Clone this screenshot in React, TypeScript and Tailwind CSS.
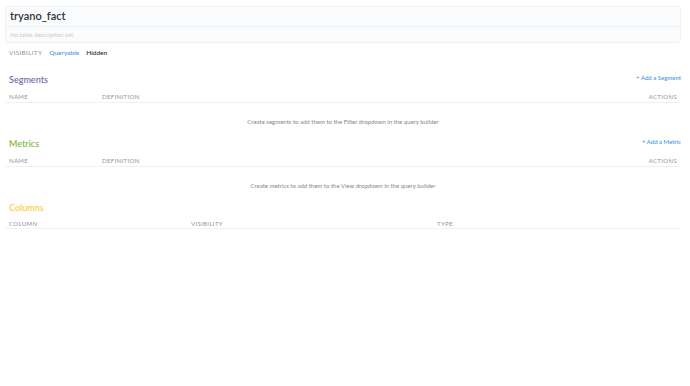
import React from 'react'

const lato = { fontFamily: 'Lato, "Open Sans", sans-serif' }

const Section = ({ title, color, addLabel, empty }: { title: string; color: string; addLabel: string; empty: string }) => (
  <div>
    <div className="flex h-[20px] items-center justify-between">
      <h2 className={`pl-[4px] text-[9px] font-semibold ${color}`}>{title}</h2>
      <span className="pb-[5px] text-[6px] font-semibold text-[#509ee3]">{addLabel}</span>
    </div>
    <div className="flex h-[13px] items-center border-b border-[#f0f1f3] px-[4px] text-[6px] uppercase tracking-[0.06em] text-[#8d939e]">
      <span className="w-[93px]">Name</span>
      <span className="flex-1">Definition</span>
      <span>Actions</span>
    </div>
    <div className="h-[31px] pt-[14px] text-center text-[6px] text-[#7f8790]">{empty}</div>
  </div>
)

export default function App() {
  return (
    <div style={lato} className="h-[386px] w-[690px] bg-white px-[5px] pt-[6px] pr-[9px]">
      <div className="rounded-[3px] border border-[#eef0f2] bg-[#fafbfc]">
        <div className="flex h-[20px] items-center border-b border-[#eef0f2] px-[4px]">
          <h1 className="text-[11px] font-semibold text-[#2e353b]">tryano_fact</h1>
        </div>
        <div className="flex h-[15px] items-center px-[4px] text-[6px] text-[#c9ced3]">No table description yet</div>
      </div>
      <div className="flex h-[20px] items-center px-[4px] text-[6.5px]">
        <span className="mr-[7px] uppercase tracking-[0.04em] text-[#8d939e]">Visibility</span>
        <span className="mr-[7px] font-semibold text-[#509ee3]">Queryable</span>
        <span className="font-semibold text-[#2e353b]">Hidden</span>
      </div>
      <div className="h-[7px]" />
      <Section title="Segments" color="text-[#7172ad]" addLabel="+ Add a Segment" empty="Create segments to add them to the Filter dropdown in the query builder" />
      <Section title="Metrics" color="text-[#84bb4c]" addLabel="+ Add a Metric" empty="Create metrics to add them to the View dropdown in the query builder" />
      <div>
        <div className="flex h-[20px] items-center">
          <h2 className="pl-[4px] text-[9px] font-semibold text-[#f9cf48]">Columns</h2>
        </div>
        <div className="flex h-[11px] items-center border-b border-[#f0f1f3] px-[4px] text-[6px] uppercase tracking-[0.06em] text-[#8d939e]">
          <span className="w-[182px]">Column</span>
          <span className="w-[246px]">Visibility</span>
          <span>Type</span>
        </div>
      </div>
    </div>
  )
}
